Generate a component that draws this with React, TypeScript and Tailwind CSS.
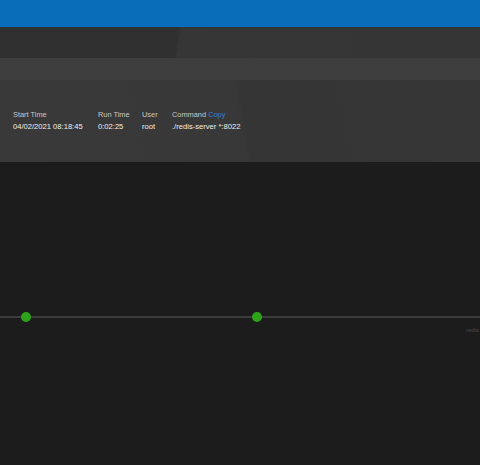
import React from 'react';

const processInfo = [
  { label: 'Start Time', value: '04/02/2021 08:18:45', width: 'w-[85px]' },
  { label: 'Run Time', value: '0:02:25', width: 'w-[44px]' },
  { label: 'User', value: 'root', width: 'w-[30px]' },
];

export default function App() {
  return (
    <div className="w-[480px] h-[465px] bg-[#1c1c1c] flex flex-col overflow-hidden font-['Liberation_Sans',Arial,sans-serif]">
      {/* Top bar */}
      <div className="h-[27px] bg-[#0a6dba] shrink-0" />

      {/* Header bands */}
      <div className="h-[31px] shrink-0 bg-[linear-gradient(100deg,#303030_0%,#303030_37%,#363636_37.5%,#353535_100%)]" />
      <div className="h-[22px] bg-[#3e3e3e] shrink-0" />

      {/* Process details */}
      <div className="h-[82px] shrink-0 pl-[13px] pt-[29px] flex bg-[linear-gradient(80deg,#393939_0%,#383838_50%,#353535_51%,#363636_100%)]">
        {processInfo.map(item => (
          <div key={item.label} className={`${item.width} flex flex-col`}>
            <span className="text-[7.4px] leading-[12px] text-[#c8c8c8]">{item.label}</span>
            <span className="text-[7.6px] leading-[12px] text-[#f0f0f0]">{item.value}</span>
          </div>
        ))}
        <div className="flex flex-col">
          <span className="text-[7.4px] leading-[12px] text-[#c8c8c8]">
            Command <span className="text-[#3d7fd8]">Copy</span>
          </span>
          <span className="text-[7.6px] leading-[12px] text-[#f0f0f0]">./redis-server *:8022</span>
        </div>
      </div>

      {/* Timeline */}
      <div className="relative flex-1">
        <div className="absolute left-0 right-0 top-[154px] h-[2px] bg-[#3c3c3c]" />
        <div className="absolute left-[21px] top-[150px] w-[10px] h-[10px] rounded-full bg-[#2ea319]" />
        <div className="absolute left-[252px] top-[150px] w-[10px] h-[10px] rounded-full bg-[#2ea319]" />
        <span className="absolute left-[466px] top-[164px] text-[6px] text-[#4a4a4a] whitespace-nowrap">redis</span>
      </div>
    </div>
  );
}
